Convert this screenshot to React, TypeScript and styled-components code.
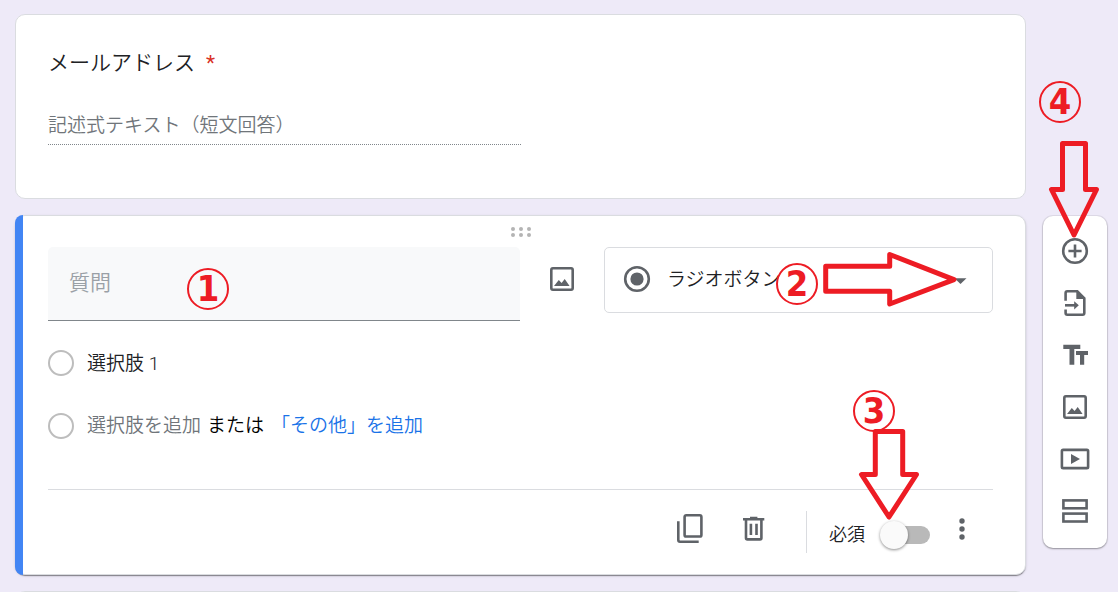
import React from "react";
import styled, { createGlobalStyle } from "styled-components";

const ink = "#202124";
const muted = "#70757a";
const iconGrey = "#5f6368";
const line = "#dadce0";
const blue = "#4285f4";
const marker = "#ed1c24";

const GlobalStyle = createGlobalStyle`
  *, *::before, *::after { box-sizing: border-box; }
  body {
    margin: 0;
    background: #eeeaf8;
    color: ${ink};
    font-family: Roboto, "Noto Sans CJK JP", sans-serif;
    font-weight: 350;
    font-size: 19px;
    line-height: 24px;
  }
  button, input, select { font: inherit; color: inherit; margin: 0; }
`;

const Page = styled.main`
  display: grid;
  grid-template-columns: minmax(0, 1fr) 64px;
  column-gap: 17px;
  row-gap: 16px;
  align-items: start;
  height: 100vh;
  overflow: hidden;
  padding: 14px 11px 0 15px;
`;

const Card = styled.section`
  grid-column: 1;
  position: relative;
  background: #fff;
  border: 1px solid ${line};
  border-radius: 10px;
  padding: 0 32px;
`;

const EmailCard = styled(Card)`
  padding-top: 34px;
  padding-bottom: 53px;
`;

const ActiveCard = styled(Card)`
  box-shadow: 0 2px 1px -1px rgba(0, 0, 0, 0.3), 0 1px 1px rgba(0, 0, 0, 0.14),
    0 1px 3px rgba(0, 0, 0, 0.12);
  padding-bottom: 15px;
  &::before {
    content: "";
    position: absolute;
    inset: -1px auto -1px -1px;
    width: 8px;
    background: ${blue};
    border-radius: 10px 0 0 10px;
  }
`;

const NextCard = styled(Card)`
  min-height: 64px;
`;

const Title = styled.label`
  display: block;
  font-size: 21px;
  line-height: 28px;
`;

const Required = styled.span`
  color: #d93025;
  font-weight: 400;
  margin-left: 11px;
`;

const ShortAnswer = styled.input`
  display: block;
  width: 50%;
  height: 33px;
  margin-top: 35px;
  padding: 0 0 6px;
  border: 0;
  border-bottom: 1px dotted #80868b;
  background: transparent;
  &::placeholder { color: ${muted}; opacity: 1; }
`;

const DragHandle = styled.button`
  display: block;
  margin: 11px auto 10px;
  padding: 0;
  border: 0;
  background: none;
  height: 10px;
  svg { display: block; }
`;

const QuestionRow = styled.div`
  display: grid;
  grid-template-columns: 472fr 84px 389fr;
  align-items: start;
  justify-items: stretch;
`;

const Anchor = styled.div`
  position: relative;
`;

const QuestionInput = styled.input`
  display: block;
  width: 100%;
  height: 74px;
  padding: 0 21px 2px;
  border: 0;
  border-bottom: 1px solid #80868b;
  border-radius: 5px 5px 0 0;
  background: #f8f9fa;
  font-size: 21px;
  &::placeholder { color: #9aa0a6; opacity: 1; }
`;

const IconButton = styled.button<{ $height?: number }>`
  display: flex;
  align-items: center;
  justify-content: center;
  width: 32px;
  height: ${(p) => p.$height ?? 36}px;
  padding: 0;
  border: 0;
  background: none;
  color: ${iconGrey};
  justify-self: center;
`;

const TypeSelect = styled.select`
  display: block;
  appearance: none;
  width: 100%;
  height: 66px;
  padding: 0 48px 0 62px;
  border: 1px solid ${line};
  border-radius: 5px;
  background: #fff;
`;

const SelectIcon = styled.span<{ $side: "left" | "right" }>`
  position: absolute;
  top: 16px;
  ${(p) => p.$side}: 17px;
  height: 32px;
  color: ${iconGrey};
  pointer-events: none;
`;

const Options = styled.div`
  display: flex;
  flex-direction: column;
  gap: 31px;
  margin-top: 26px;
`;

const OptionRow = styled.div`
  display: flex;
  align-items: center;
  height: 32px;
`;

const OptionRadio = styled.input`
  appearance: none;
  flex: none;
  width: 26px;
  height: 26px;
  margin-right: 13px;
  border: 2px solid #bdbdbd;
  border-radius: 50%;
`;

const OptionInput = styled.input`
  flex: 1;
  min-width: 0;
  height: 32px;
  padding: 0 0 4px;
  border: 0;
  background: none;
`;

const TextButton = styled.button<{ $color: string }>`
  padding: 0;
  border: 0;
  background: none;
  color: ${(p) => p.$color};
  white-space: nowrap;
`;

const Or = styled.span`
  margin: 0 7px 0 6px;
  color: #000;
  white-space: nowrap;
`;

const Footer = styled.footer`
  display: flex;
  align-items: flex-start;
  justify-content: flex-end;
  margin-top: 47px;
  padding: 21px 15px 0 0;
  border-top: 1px solid ${line};
`;

const FooterTools = styled.div`
  display: flex;
  gap: 32px;
`;

const Separator = styled.span`
  width: 1px;
  height: 42px;
  margin: 0 22px 0 36px;
  background: ${line};
`;

const SwitchLabel = styled.label`
  display: flex;
  align-items: center;
  gap: 15px;
  height: 48px;
  margin-right: 16px;
  font-size: 18px;
`;

const Switch = styled.input`
  appearance: none;
  display: block;
  position: relative;
  width: 50px;
  height: 28px;
  &::before {
    content: "";
    position: absolute;
    inset: 5px 0 5px 4px;
    border-radius: 9px;
    background: #b9b9b9;
  }
  &::after {
    content: "";
    position: absolute;
    left: 0;
    top: 0;
    width: 28px;
    height: 28px;
    border-radius: 50%;
    background: #fafafa;
    box-shadow: 0 1px 3px rgba(0, 0, 0, 0.45);
  }
`;

const Toolbar = styled.nav`
  grid-column: 2;
  position: relative;
  display: flex;
  flex-direction: column;
  align-items: center;
  margin-top: 1px;
  padding: 9px 0 11px;
  background: #fff;
  border-radius: 10px;
  box-shadow: 0 0 0 1px rgba(0, 0, 0, 0.06), 0 1px 2px rgba(0, 0, 0, 0.35);
`;

const Badge = styled.span<{ $x: number; $y: number }>`
  position: absolute;
  left: ${(p) => p.$x}px;
  top: ${(p) => p.$y}px;
  display: flex;
  align-items: center;
  justify-content: center;
  width: 42px;
  height: 42px;
  border: 2px solid ${marker};
  border-radius: 50%;
  color: ${marker};
  font-family: "DejaVu Sans Condensed", "DejaVu Sans", sans-serif;
  font-weight: 700;
  font-size: 36px;
  line-height: 38px;
  pointer-events: none;
`;

const ArrowSvg = styled.svg<{ $x: number; $y: number }>`
  position: absolute;
  z-index: 2;
  left: ${(p) => p.$x}px;
  top: ${(p) => p.$y}px;
  fill: none;
  stroke: ${marker};
  stroke-width: 5;
  stroke-linejoin: round;
  pointer-events: none;
`;

function Arrow(props: { x: number; y: number; width: number; height: number; points: string }) {
  return (
    <ArrowSvg $x={props.x} $y={props.y} width={props.width} height={props.height} aria-hidden="true">
      <polygon points={props.points} />
    </ArrowSvg>
  );
}

function Icon({ children }: { children: React.ReactNode }) {
  return (
    <svg width="32" height="32" viewBox="0 0 32 32" fill="none" stroke="currentColor" strokeWidth="2.6" aria-hidden="true">
      {children}
    </svg>
  );
}

const ImageIcon = () => (
  <Icon>
    <rect x="5.3" y="5.3" width="21.4" height="21.4" rx="1.6" />
    <path d="M8 23 L12.8 17 L15.6 20 L18.7 16 L23.6 23Z" fill="currentColor" stroke="none" />
  </Icon>
);

const AddIcon = () => (
  <Icon>
    <circle cx="16" cy="16" r="11.8" />
    <path d="M16 9.4V22.6M9.4 16H22.6" />
  </Icon>
);

const ImportIcon = () => (
  <Icon>
    <path d="M6.6 13.8V6Q6.6 4.3 8.3 4.3H18.3L25.3 11.3V26Q25.3 27.7 23.6 27.7H8.3Q6.6 27.7 6.6 26V22.4" />
    <path d="M17.3 3.6V11.9H26Z" fill="currentColor" stroke="none" />
    <path d="M6 18.3H17" />
    <path d="M15.2 14.2L19.8 18.3L15.2 22.4Z" fill="currentColor" stroke="none" />
  </Icon>
);

const TitleIcon = () => (
  <Icon>
    <path d="M4.3 5.7H21.3V9.9H15.3V25.7H10.5V9.9H4.3ZM17 12H29V16H25.2V25.7H21V16H17Z" fill="currentColor" stroke="none" />
  </Icon>
);

const VideoIcon = () => (
  <Icon>
    <rect x="2.9" y="6.9" width="26.2" height="18.2" rx="1.2" />
    <path d="M12 11V21L21 16Z" fill="currentColor" stroke="none" />
  </Icon>
);

const SectionIcon = () => (
  <Icon>
    <rect x="4.4" y="5.4" width="23.2" height="7.9" />
    <rect x="4.4" y="18.6" width="23.2" height="7.9" />
  </Icon>
);

const CopyIcon = () => (
  <Icon>
    <rect x="10.6" y="2.3" width="16.8" height="21.2" rx="1.6" />
    <path d="M4.3 8.3V27Q4.3 28.7 6 28.7H24.7" />
  </Icon>
);

const TrashIcon = () => (
  <Icon>
    <path d="M5 6.3H26.3M12 5H19.4" />
    <path d="M8 6.5V25Q8 26.4 9.4 26.4H22Q23.4 26.4 23.4 25V6.5" />
    <path d="M12.9 10.7V21.9M18.5 10.7V21.9" />
  </Icon>
);

const MoreIcon = () => (
  <Icon>
    <g fill="currentColor" stroke="none">
      <circle cx="16" cy="8" r="2.7" />
      <circle cx="16" cy="16" r="2.7" />
      <circle cx="16" cy="24" r="2.7" />
    </g>
  </Icon>
);

const tools = [
  { name: "質問を追加", icon: <AddIcon /> },
  { name: "質問をインポート", icon: <ImportIcon /> },
  { name: "タイトルと説明を追加", icon: <TitleIcon /> },
  { name: "画像を追加", icon: <ImageIcon /> },
  { name: "動画を追加", icon: <VideoIcon /> },
  { name: "セクションを追加", icon: <SectionIcon /> },
];

export default function App() {
  return (
    <>
      <GlobalStyle />
      <Page>
        <EmailCard>
          <Title htmlFor="email">
            メールアドレス<Required>*</Required>
          </Title>
          <ShortAnswer id="email" disabled placeholder="記述式テキスト（短文回答）" />
        </EmailCard>

        <ActiveCard>
          <DragHandle aria-label="移動">
            <svg width="20" height="10" viewBox="0 0 20 10" fill="#b4b4b4">
              {[2, 10, 18].map((x) => (
                <React.Fragment key={x}>
                  <circle cx={x} cy="2" r="2" />
                  <circle cx={x} cy="8" r="2" />
                </React.Fragment>
              ))}
            </svg>
          </DragHandle>

          <QuestionRow>
            <Anchor>
              <QuestionInput aria-label="質問" placeholder="質問" />
              <Badge $x={139} $y={21}>1</Badge>
            </Anchor>
            <IconButton $height={64} aria-label="画像を追加">
              <ImageIcon />
            </IconButton>
            <Anchor>
              <TypeSelect aria-label="質問の形式" defaultValue="radio">
                <option value="radio">ラジオボタン</option>
              </TypeSelect>
              <SelectIcon $side="left">
                <Icon>
                  <circle cx="16" cy="16" r="11.8" />
                  <circle cx="16" cy="16" r="6.6" fill="currentColor" stroke="none" />
                </Icon>
              </SelectIcon>
              <SelectIcon $side="right">
                <Icon>
                  <path d="M10.5 15.3H22.5L16.5 21Z" fill="currentColor" stroke="none" />
                </Icon>
              </SelectIcon>
              <Badge $x={172} $y={16}>2</Badge>
              <Arrow
                x={219}
                y={4}
                width={136}
                height={58}
                points="2.7,15.3 66.7,15.3 66.7,3.5 131,28.7 66.7,53 66.7,40.3 2.7,40.3"
              />
            </Anchor>
          </QuestionRow>

          <Options>
            <OptionRow>
              <OptionRadio type="radio" disabled aria-label="選択肢 1" />
              <OptionInput aria-label="選択肢の値" defaultValue="選択肢 1" />
            </OptionRow>
            <OptionRow>
              <OptionRadio type="radio" disabled aria-label="新しい選択肢" />
              <TextButton $color={muted}>選択肢を追加</TextButton>
              <Or>または</Or>
              <TextButton $color="#1a73e8">「その他」を追加</TextButton>
            </OptionRow>
          </Options>

          <Footer>
            <FooterTools>
              <IconButton aria-label="コピーを作成">
                <CopyIcon />
              </IconButton>
              <IconButton aria-label="削除">
                <TrashIcon />
              </IconButton>
            </FooterTools>
            <Separator />
            <SwitchLabel>
              必須
              <Anchor>
                <Switch type="checkbox" role="switch" />
                <Badge $x={-27} $y={-131}>3</Badge>
                <Arrow
                  x={-22}
                  y={-93}
                  width={64}
                  height={94}
                  points="17.3,3.5 44.7,3.5 44.7,46.5 58.5,46.5 31,89 3.5,46.5 17.3,46.5"
                />
              </Anchor>
            </SwitchLabel>
            <IconButton aria-label="その他のオプション">
              <MoreIcon />
            </IconButton>
          </Footer>
        </ActiveCard>

        <Toolbar aria-label="フォームの編集">
          {tools.map((tool) => (
            <IconButton key={tool.name} $height={52} aria-label={tool.name}>
              {tool.icon}
            </IconButton>
          ))}
          <Badge $x={-4} $y={-135}>4</Badge>
          <Arrow
            x={5}
            y={-76}
            width={54}
            height={100}
            points="14.5,3.5 37.5,3.5 37.5,49.5 48.5,49.5 26,95 3.5,49.5 14.5,49.5"
          />
        </Toolbar>

        <NextCard />
      </Page>
    </>
  );
}
